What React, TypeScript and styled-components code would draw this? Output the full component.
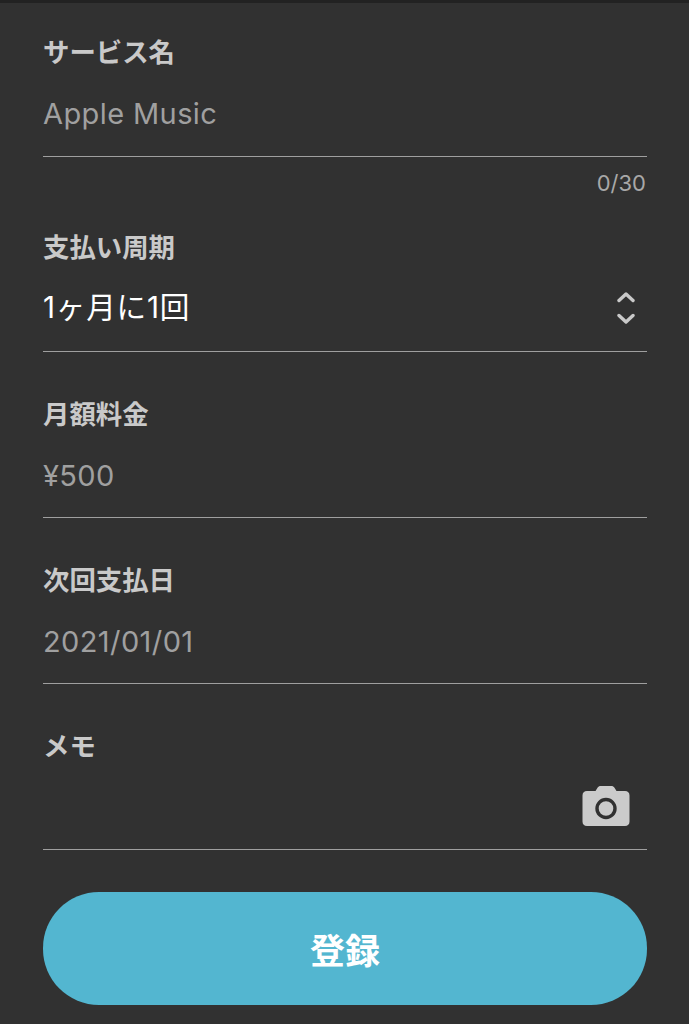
import React from "react";
import styled, { createGlobalStyle } from "styled-components";

const Global = createGlobalStyle`
  html, body { margin: 0; padding: 0; background: #313131; }
  * { box-sizing: border-box; }
  body { font-family: Inter, "Noto Sans CJK JP", sans-serif; }
`;

const Page = styled.main`
  width: 689px;
  height: 1024px;
  overflow: hidden;
  background: #313131;
  border-top: 3px solid #222222;
  padding: 34px 42px 0 43px;
  display: flex;
  flex-direction: column;
`;

const Field = styled.section<{ $gap?: number }>`
  margin-top: ${(p) => p.$gap ?? 0}px;
`;

const Label = styled.div`
  height: 28px;
  line-height: 28px;
  font-size: 26.4px;
  font-weight: 700;
  color: #c9c9c9;
  font-family: "Noto Sans CJK JP", sans-serif;
`;

const Control = styled.div<{ $tall?: boolean }>`
  height: ${(p) => (p.$tall ? 92 : 91)}px;
  padding-top: 6px;
  display: flex;
  align-items: center;
  justify-content: space-between;
  border-bottom: 1px solid #9f9f9f;
`;

const Value = styled.span`
  font-size: 29px;
  letter-spacing: 0.4px;
  color: #a0a0a0;
`;

const Selected = styled.span`
  font-size: 29.6px;
  letter-spacing: 0.8px;
  color: #ffffff;
  margin-bottom: 6px;
`;

const Helper = styled.div`
  margin-top: 16px;
  height: 20px;
  line-height: 20px;
  text-align: right;
  padding-right: 1px;
  font-size: 22px;
  color: #a8a8a8;
`;

const IconSlot = styled.span<{ $right: number; $lift: number }>`
  display: flex;
  margin-right: ${(p) => p.$right}px;
  margin-bottom: ${(p) => p.$lift}px;
`;

const Submit = styled.button`
  margin-top: 42px;
  height: 113px;
  width: 604px;
  border: 0;
  border-radius: 56px;
  background: #53b6d0;
  color: #ffffff;
  font-family: "Noto Sans CJK JP", sans-serif;
  font-size: 35px;
  font-weight: 700;
  padding: 0;
`;

const Chevrons = () => (
  <svg width="18" height="34" viewBox="0 0 18 34" fill="none" stroke="#c9c9c9" strokeWidth="3.4" strokeLinecap="round" strokeLinejoin="round">
    <path d="M2 9.5 9 3l7 6.5" />
    <path d="M2 24.5 9 31l7-6.5" />
  </svg>
);

const Camera = () => (
  <svg width="48" height="42" viewBox="0 0 48 42">
    <path fill="#cbcbcb" d="M5 6h8.5l2-3.2C16.3 1.5 17.3 1 18.8 1h10.4c1.5 0 2.5.5 3.3 1.8l2 3.2H43c2.8 0 4.5 1.7 4.5 4.5v26c0 2.8-1.7 4.5-4.5 4.5H5c-2.8 0-4.5-1.7-4.5-4.5v-26C.5 7.7 2.2 6 5 6z" />
    <circle cx="24" cy="23.500" r="9" fill="none" stroke="#313131" strokeWidth="3.4" />
  </svg>
);

export default function App() {
  return (
    <Page>
      <Global />
      <Field>
        <Label>サービス名</Label>
        <Control $tall>
          <Value>Apple Music</Value>
        </Control>
        <Helper>0/30</Helper>
      </Field>
      <Field $gap={39}>
        <Label>支払い周期</Label>
        <Control $tall>
          <Selected>1ヶ月に1回</Selected>
          <IconSlot $right={12} $lift={2}>
            <Chevrons />
          </IconSlot>
        </Control>
      </Field>
      <Field $gap={47}>
        <Label>月額料金</Label>
        <Control>
          <Value>¥500</Value>
        </Control>
      </Field>
      <Field $gap={47}>
        <Label>次回支払日</Label>
        <Control>
          <Value>2021/01/01</Value>
        </Control>
      </Field>
      <Field $gap={47}>
        <Label>メモ</Label>
        <Control>
          <span />
          <IconSlot $right={17} $lift={3}>
            <Camera />
          </IconSlot>
        </Control>
      </Field>
      <Submit>登録</Submit>
    </Page>
  );
}
